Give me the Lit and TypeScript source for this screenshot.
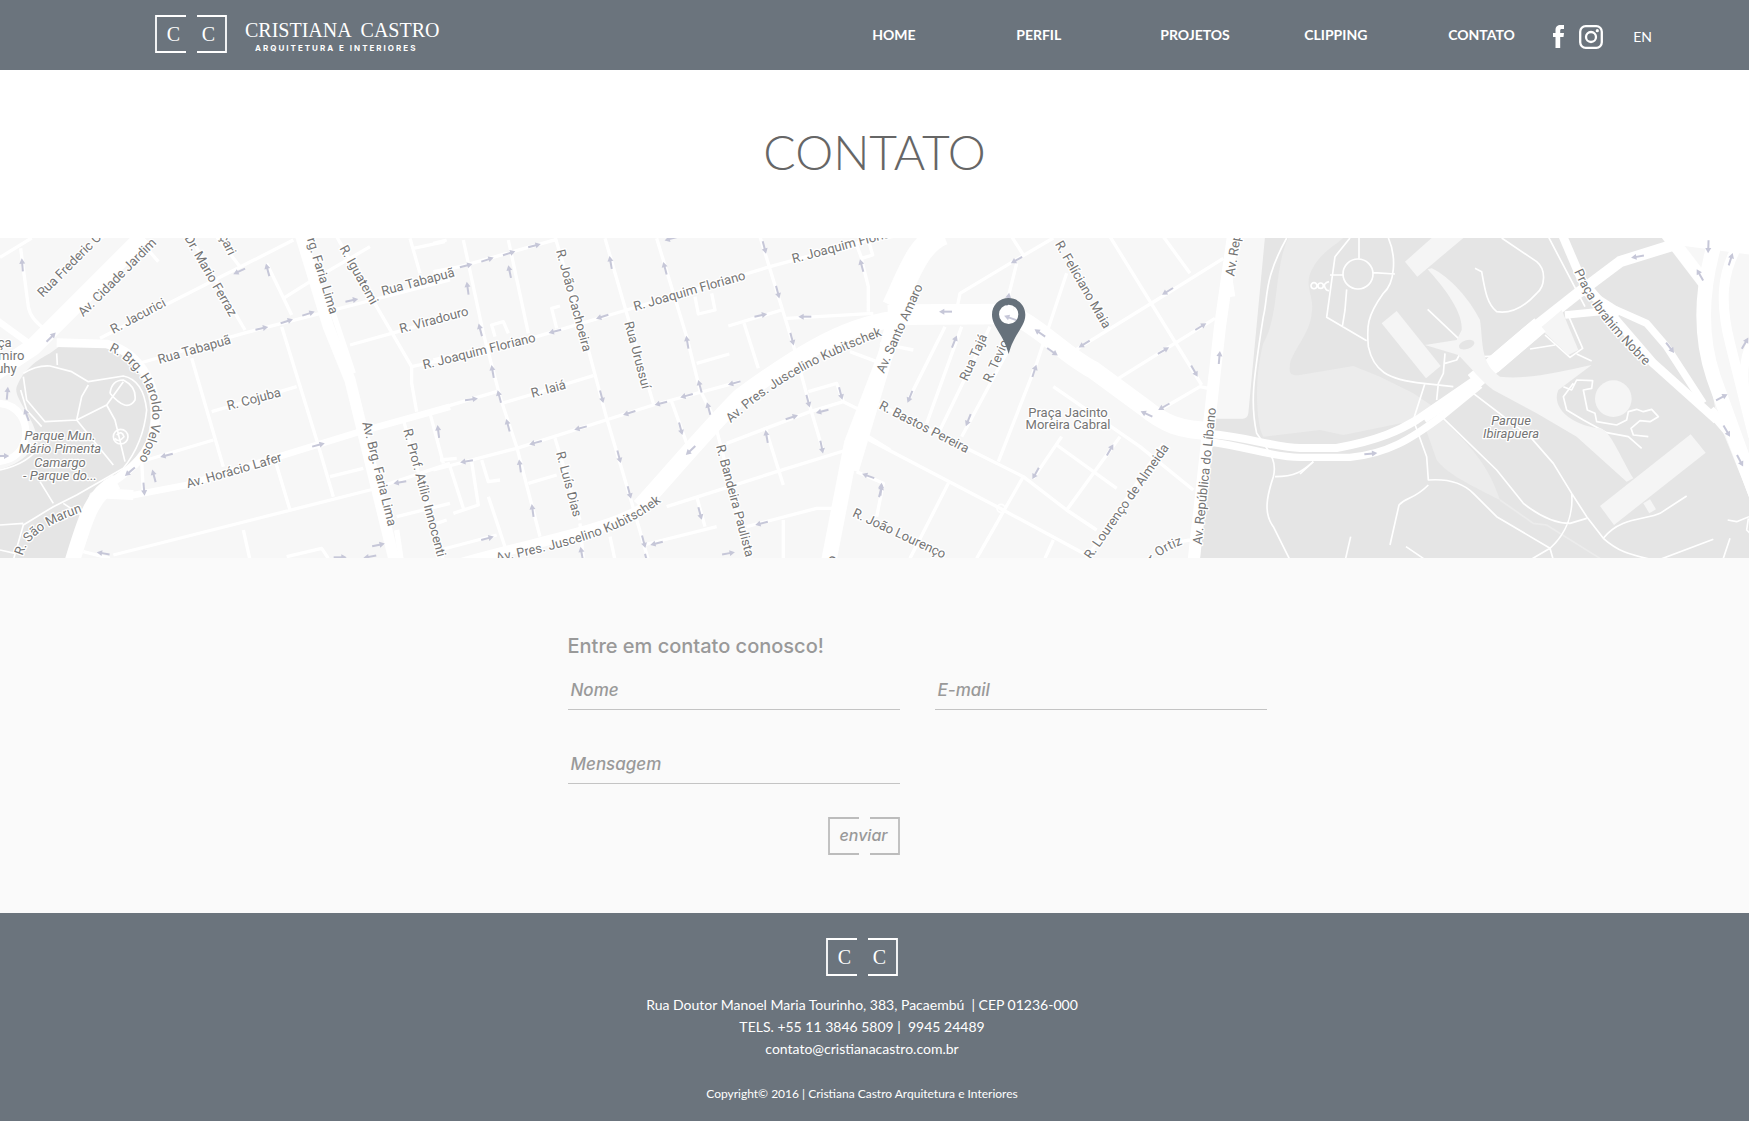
import { LitElement, html, svg, css } from "lit";
import { customElement } from "lit/decorators.js";

type Arrow = [x: number, y: number, angle: number];
type Label = [x: number, y: number, angle: number, text: string, anchor?: string, style?: string];
interface Curve { id: string; d: string; text: string; anchor?: string }
interface Sheet {
  x: number;
  minor: string;
  major: [width: number, d: string][];
  paths: string;
  arrows: Arrow[];
  labels: Label[];
  curves: Curve[];
}

/* The map is drawn three units to the pixel, as four sheets laid side by side. */
const sheets: Sheet[] = [
  {
    x: 0,
    minor: `M0 82L95 24M62 55L85 230Q92 270 140 300M300 325L880 30M570 20L735 300M650 20L720 110
      M400 405L730 310L1350 150M800 100L875 255M845 290L950 630L1000 800M850 205L930 155L1110 50
      M575 385L670 710M635 545L890 470M440 690L640 630M425 690L430 790M340 975L1110 780L1350 700
      M825 690L870 840M730 900L750 990M990 740L1090 715M1050 345L1175 310L1350 260
      M1010 20L1130 230L1235 410L1235 460L1250 545M1235 410L1350 385M1230 25L1260 130M1240 55L1335 35
      M1210 570L1330 990M1290 550L1330 700M1190 860L1350 820M860 980L965 955L985 985M445 60L475 95M250 965L330 985`,
    major: [
      [52, "M-20 430L100 350L430 20"],
      [20, "M-10 270L100 350"],
      [26, "M170 338L320 342C430 370 480 480 464 590C450 670 400 715 330 760"],
      [46, "M350 755C280 790 260 850 215 1000"],
      [22, "M-10 520C60 520 85 580 75 630C60 680 30 690 -10 695"],
      [30, "M290 790L400 795"],
      [20, "M390 797L560 765L1080 605L1350 530"],
      [34, "M900 10L985 290L1050 450L1185 1000"],
      [16, "M1000 250L1060 430M1190 900L1205 1000"],
    ],
    paths: `M70 430Q110 405 150 408L215 425L265 455L370 438Q430 450 440 540Q430 640 370 715L230 795L160 830L70 885L40 990
      M170 370L172 405M70 440L80 510L135 575L230 570L245 500L265 465M230 570L320 525L370 455M230 570L340 705M320 525L345 570L375 695
      M330 490Q335 450 370 450Q410 470 405 510Q380 550 330 490M120 755L160 820M0 885L70 880M190 820L250 860M0 960L45 970
      M62 480L80 540L125 590M0 720Q90 700 125 640M340 620a22 22 0 1 0 44 0a22 22 0 1 0-44 0M350 615Q365 600 372 620Q355 640 345 625`,
    arrows: [
      [67, 105, -95], [153, 322, -45], [22, 490, -85], [80, 555, -110], [8, 678, 0], [718, 124, 155], [803, 120, -105],
      [785, 295, -12], [860, 274, -18], [925, 251, -18], [1055, 211, -12], [500, 676, 165], [390, 725, 140], [432, 777, 85],
      [462, 738, -105], [955, 645, -15], [1200, 757, 170], [1315, 605, -97], [310, 970, 190], [1135, 945, -12], [1110, 980, 170], [1020, 982, 0],
    ],
    labels: [
      [128, 203, -45, "Rua Frederic Chopin"], [250, 262, -45, "Av. Cidade Jardim"], [690, 262, 60, "Dr. Mario Ferraz", "end"],
      [686, 78, 64, "çari", "end"], [340, 312, -28, "R. Jacurici"], [478, 402, -16, "Rua Tabapuã"], [563, 775, -16, "Av. Horácio Lafer"],
      [685, 541, -15, "R. Cojuba"], [1087, 578, 76, "Av. Brg. Faria Lima"], [990, 254, 73, "Av. Brg. Faria Lima", "end"],
      [1018, 55, 61, "R. Iguatemi"], [1148, 197, -15, "Rua Tabapuã"], [1202, 310, -15, "R. Viradouro"],
      [1272, 418, -14, "R. Joaquim Floriano"], [1210, 600, 75, "R. Prof. Atílio Innocenti"],
      [35, 350, 0, "ça", "end"], [73, 390, 0, "miro", "end"], [50, 428, 0, "uhy", "end"],
      [180, 631, 0, "Parque Mun.", "middle", "italic"], [180, 670, 0, "Mário Pimenta", "middle", "italic"],
      [180, 710, 0, "Camargo", "middle", "italic"], [180, 749, 0, "- Parque do...", "middle", "italic"],
    ],
    curves: [
      { id: "veloso", d: "M326 362C400 395 455 470 457 545C457 600 440 640 418 690", text: "R. Brg. Haroldo Veloso" },
      { id: "marun", d: "M68 978C80 930 120 885 280 835", text: "R. São Marun" },
    ],
  },
  {
    x: 1320,
    minor: `M-20 125L60 110L350 28M70 30L130 310L180 500L230 650L300 920M205 30L265 310M345 20L440 340L500 565L570 800L625 990
      M495 25L560 250L640 520M650 25L740 320L780 480L830 580M830 600L930 990M-20 390L290 320L560 240L990 110L1320 20
      M350 295L335 235L360 228M165 320L155 285L190 275L205 310M185 520L270 495L460 437M0 535L170 485M-20 720L230 655L640 525L900 455
      M345 625L420 870M265 760L350 735M695 515L740 640M770 400L868 372M865 288L1025 240M912 280L955 415
      M960 20L1020 215L1060 345L1110 530L1150 665M1040 265L1300 250M1265 90L1285 170L1285 245M1250 45L1265 85L1298 75L1285 30
      M765 200L775 252L825 240L815 190M860 640L1110 545L1210 515L1260 540M1105 485L1190 460L1210 515M680 830L1010 725L1220 660
      M975 590L1030 765M770 800L795 890M610 945L830 890M920 890L1130 835L1190 835M1030 870L1030 990M0 960L170 915M145 800L195 950
      M30 710L70 835M95 695L115 825L40 850M125 690L145 755L180 750M1270 610L1350 660M1230 365L1310 395M1250 725L1330 760L1310 860
      M510 920L525 990M420 880L430 990M0 690L50 685M-20 40L20 30M-10 880L20 870`,
    major: [
      [50, "M1360 268C1200 290 1050 390 900 500C800 600 700 720 600 830"],
      [30, "M640 815C520 900 300 930 60 1000"],
      [46, "M1350 340L1235 640L1165 1000"],
    ],
    paths: "",
    arrows: [
      [78, 107, -15], [142, 89, -18], [207, 70, -18], [283, 47, -15], [83, 175, -98], [209, 125, -102], [121, 300, -105], [487, 260, 162],
      [345, 304, 165], [512, 98, -100], [675, 115, -105], [973, 52, 75], [1013, 186, 75], [1265, 107, -105], [962, 256, -12], [1095, 260, 180],
      [1056, 327, 75], [158, 425, -100], [94, 508, -8], [178, 500, -105], [485, 500, 75], [204, 586, -105], [422, 594, 165], [568, 549, 162],
      [663, 520, 165], [740, 497, 165], [883, 459, 165], [780, 469, -105], [742, 337, -100], [806, 536, -105], [287, 638, 165], [80, 694, 170],
      [722, 596, 75], [752, 661, 137], [240, 708, -98], [537, 680, 75], [568, 787, 75], [278, 842, -98], [1202, 490, 75], [1104, 513, 75],
      [1147, 544, 165], [1055, 562, -18], [980, 620, -100], [1145, 651, 78], [1285, 738, 200], [1322, 783, -75], [780, 850, 75],
      [965, 880, 165], [650, 940, 165], [865, 970, -10], [425, 970, -100], [611, 935, 75], [142, 925, -15], [620, 990, 75], [693, 26, 165],
    ],
    labels: [
      [348, 62, 75, "R. João Cachoeira"], [585, 243, -16, "R. Joaquim Floriano"], [1060, 100, -15, "R. Joaquim Floriano"],
      [553, 278, 75, "Rua Urussuí"], [277, 503, -15, "R. Iaiá"], [348, 668, 75, "R. Luís Dias"], [828, 648, 75, "R. Bandeira Paulista"],
      [1184, 1002, -75, "o"],
    ],
    curves: [
      { id: "kubitschek-east", d: "M872 580C980 480 1100 400 1360 304", text: "Av. Pres. Juscelino Kubitschek" },
      { id: "kubitschek-west", d: "M40 1040L190 992C420 944 560 900 664 815", text: "Av. Pres. Juscelino Kubitschek", anchor: "end" },
    ],
  },
  {
    x: 2640,
    minor: `M395 20L430 75M520 24L390 100L240 190L230 240M410 100L385 200M560 130L470 400L355 695M195 290L85 510M245 290L140 580
      M330 290L180 600M385 360L245 620M-30 510L270 660L430 740L560 840L650 900M-50 620L360 835L610 970M205 760L90 985M430 740L290 985
      M520 930L495 985M570 370L830 210L1030 85M690 20L965 465M850 20L930 130M700 455L1005 265M840 540L960 470L985 475
      M520 470L780 650L940 780M530 645L710 775M545 620L460 745M720 620L560 840M850 640L620 985M0 340L100 360M900 935L930 930`,
    major: [
      [70, "M190 10C110 40 80 150 40 230"],
      [44, "M60 190L10 400L-85 720"],
      [62, "M24 256L60 254L400 252"],
      [54, "M395 255C480 290 560 380 640 420L790 530C850 580 900 602 1000 602"],
      [36, "M1060 10L1020 290L985 600L940 1000"],
      [16, "M1050 150L1058 200"],
    ],
    paths: `M1220 24C1150 150 1165 200 1150 260C1120 450 1110 520 1130 610C1180 680 1190 700 1180 740C1160 800 1150 850 1180 890L1230 990
      M1185 740C1250 740 1270 720 1300 695M351 835a12 12 0 1 0 24 0a12 12 0 1 0-24 0`,
    arrows: [
      [410, 90, 150], [863, 184, 148], [613, 342, 148], [962, 290, -32], [850, 362, -30], [943, 423, 60], [852, 530, 150], [800, 552, 205],
      [197, 245, 180], [391, 264, 200], [480, 309, 215], [517, 365, 35], [1018, 383, -85], [223, 335, -68], [90, 500, 112], [265, 570, 112],
      [463, 423, -72], [690, 660, -60], [467, 730, 120], [3, 778, -85], [384, 208, -80],
    ],
    labels: [
      [524, 42, 60, "R. Felíciano Maia"], [12, 432, -66, "Av. Santo Amaro"], [262, 455, -66, "Rua Tajá"], [332, 460, -66, "R. Tevio"],
      [-5, 535, 27, "R. Bastos Pereira"], [-85, 858, 25, "R. João Lourenço"], [564, 560, 0, "Praça Jacinto", "middle"],
      [564, 598, 0, "Moreira Cabral", "middle"], [632, 990, -55, "R. Lourenço de Almeida"], [965, 945, -84, "Av. República do Líbano"],
      [1063, 140, -81, "Av. República"],
    ],
    curves: [{ id: "ortiz", d: "M820 998Q850 960 930 936", text: "r Ortiz" }],
  },
  {
    x: 3900,
    minor: "",
    major: [
      [24, "M-270 612C-160 620 -80 652 0 654L110 654C240 630 300 600 350 570L540 440"],
      [22, "M-270 636C-160 650 -80 682 0 682L150 682C260 672 330 630 430 555L540 465"],
      [32, "M370 565L540 450"],
      [52, "M520 455L720 285"],
      [34, "M700 295L840 185L960 95L1130 42"],
      [26, "M785 10L845 150L1060 400L1250 570"],
      [22, "M795 255L950 240L1040 280L1100 350L1210 520"],
      [26, "M850 180L960 250"],
      [40, "M1100 10L1215 160"],
      [90, "M1130 0L1360 30"],
      [44, "M1250 20C1200 180 1200 320 1240 440L1370 800"],
      [30, "M1330 20C1260 120 1260 220 1290 340L1360 620"],
      [26, "M1360 330Q1310 400 1350 560"],
      [30, "M1230 540L1290 610L1370 820"],
    ],
    paths: `M150 24L105 80L80 262L200 332M129 132a45 45 0 1 0 90 0a45 45 0 1 0-90 0M177 24V85M90 135H130M220 128L285 132M140 178L135 240L127 290
      M265 24C290 80 285 160 250 190C200 260 200 290 205 350C220 420 260 450 370 460L460 470
      M605 24L710 95C740 120 735 170 710 190C660 245 620 250 590 245C560 220 555 180 545 125L525 115
      M33 167a9 9 0 1 0 18 0a9 9 0 1 0-18 0M54 167a8 8 0 1 0 16 0a8 8 0 1 0-16 0M87 155Q70 160 74 170Q78 182 87 182
      M383 238L475 325M435 370L430 430L415 460L410 510M435 400L470 390L478 375
      M375 460L340 570L380 680L385 750C450 745 490 760 520 790L590 860L750 955L690 990M385 765C340 810 320 800 297 825L270 945
      M430 565L590 720L670 820C720 860 770 880 810 880L860 865M520 490L690 620L760 700L815 790L860 860L910 925C960 970 1000 975 1060 990
      M815 790C820 850 800 910 750 955L760 990M910 925C960 860 1040 870 1080 850L1160 798M1075 990L1240 928M1290 925L1270 985
      M152 920L137 985M318 950L370 985M690 357L765 345M735 315L810 382L848 355L800 245M830 372L875 393M550 380L590 378M745 20L855 230
      M820 460L790 500L800 540L850 570L920 608L985 620L1025 655M790 470L815 480L830 450L878 452L875 475L850 480L862 540L885 550L890 575
      L950 585L980 570L985 545L1010 538L1030 545L1055 538L1075 560L1050 575L1020 572L993 595L1000 615L1045 620M1283 870L1310 875L1347 860
      M0 732L40 695M1345 865L1340 900L1360 920`,
    arrows: [
      [1013, 80, 170], [1225, 50, 92], [1292, 88, -72], [1200, 135, 240], [1110, 353, 52], [1265, 502, -28], [1280, 603, 60],
      [1320, 692, 62], [212, 671, -5], [1335, 340, -60],
    ],
    labels: [
      [633, 584, 0, "Parque", "middle", "italic"], [633, 623, 0, "Ibirapuera", "middle", "italic"],
    ],
    curves: [{ id: "nobre", d: "M822 125C860 210 920 300 1070 440", text: "Praça Ibrahim Nobre" }],
  },
];

const at = (s: Sheet) => `translate(${s.x} 0)`;

@customElement("bracket-frame")
export class BracketFrame extends LitElement {
  static styles = css`
    :host { display: block; width: 72px; height: 38px; }
    .frame { display: block; width: 100%; height: 100%; fill: none; stroke: currentColor; stroke-width: 1.8; }
  `;
  render() {
    return html`<svg class="frame" viewBox="0 0 72 38" aria-hidden="true">
      <path d="M31 1H1V37H31M42 1H71V37H42" />
    </svg>`;
  }
}

@customElement("brand-mark")
export class BrandMark extends LitElement {
  static styles = css`
    :host { display: block; }
    .mark { display: grid; width: 72px; height: 38px; color: #fff; }
    .mark > * { grid-area: 1 / 1; }
    .initials {
      display: flex; justify-content: space-around; align-items: center; padding: 0 1px;
      font: 20px/38px "Liberation Serif", serif;
    }
  `;
  render() {
    return html`<div class="mark">
      <bracket-frame></bracket-frame>
      <div class="initials"><span>C</span><span>C</span></div>
    </div>`;
  }
}

@customElement("street-map")
export class StreetMap extends LitElement {
  static styles = css`
    :host { display: block; height: 320px; }
    .map { display: block; width: 100%; height: 100%; background: #f7f7f7; }
    .park { fill: #e5e5e5; }
    .water { fill: #ececec; }
    .building { fill: #f5f5f5; }
    .road, .path { fill: none; stroke: #fff; stroke-linejoin: round; }
    .minor { stroke-width: 10; }
    .path { stroke-width: 5; }
    .stream { fill: none; stroke: #ececec; stroke-width: 5; }
    .arrow { fill: none; stroke: #c6c7d8; stroke-width: 6; }
    .head { fill: #c6c7d8; stroke: none; }
    .label {
      font-family: Roboto, "Liberation Sans", sans-serif; font-size: 39px; fill: #757575;
      stroke: #fff; stroke-width: 8; stroke-linejoin: round; paint-order: stroke;
    }
    .italic { font-style: italic; }
    .guide { fill: none; }
    .pin { fill: #66717b; fill-rule: evenodd; }
  `;

  private renderArrow([x, y, a]: Arrow) {
    return svg`<g transform="translate(${x} ${y}) rotate(${a})">
      <path class="arrow" d="M-19 0H8" /><path class="head" d="M4-9L20 0L4 9Z" />
    </g>`;
  }

  private renderLabel([x, y, a, text, anchor = "start", style = "upright"]: Label) {
    return svg`<text class="label ${style}" text-anchor=${anchor} transform="translate(${x} ${y}) rotate(${a})">${text}</text>`;
  }

  private renderCurve(c: Curve) {
    const end = c.anchor === "end";
    return svg`<path class="guide" id=${c.id} d=${c.d} /><text class="label" text-anchor=${end ? "end" : "start"}><textPath
      href="#${c.id}" startOffset=${end ? "100%" : "0%"}>${c.text}</textPath></text>`;
  }

  render() {
    return html`<svg class="map" viewBox="0 24 5247 960" preserveAspectRatio="xMidYMid slice" role="img" aria-label="Mapa">
      <path class="park" d="M180 348L320 350C400 380 460 470 450 580C440 660 400 710 340 750L270 790L205 990H0V718C70 700 120 650 105 600C90 550 40 500 50 470C70 420 110 390 150 370Z" />
      <g transform="translate(3900 0)">
        <path class="park" d="M-105 20L-155 550Q-158 568 -175 566H-260L-300 990H1360V830L1250 560L1200 280L1210 150L1085 20Z" />
        <path class="water" d="M-35 24C-80 120-60 250-110 340C-140 450-130 590-110 620L60 600L130 615L350 570L400 530L340 490L240 440L160 408L0 435C-40 440-30 415-30 400C-20 360 30 310 35 250C45 200 10 170 35 120C60 70 100 50 130 24Z" />
        <path class="water" d="M375 590L430 570C500 640 560 690 600 810C500 760 440 730 410 690Z" />
        <path class="stream" d="M600 810L700 880L740 885L900 985" />
      </g>
      ${sheets.map((s) => svg`<g transform=${at(s)}><path class="path" d=${s.paths} /><path class="road minor" d=${s.minor} /></g>`)}
      ${sheets.map((s) => svg`<g transform=${at(s)}>${s.major.map(([w, d]) => svg`<path class="road" stroke-width=${w} d=${d} />`)}</g>`)}
      <g transform="translate(3900 0)">
        <path class="building" d="M315 95L395 24H490L352 140ZM245 280L290 243L422 408L378 445ZM900 828L1172 613L1217 668L942 885ZM1030 820L1050 808L1068 838L1048 850ZM720 295L785 240L835 360L805 375Z" />
        <path class="building" d="M383 118C420 160 490 240 485 300L470 330L375 345L475 375C520 420 540 450 580 480L710 550L830 620L980 755L1000 745C960 680 930 600 900 595C830 590 750 540 775 480L875 405C780 425 680 450 600 440C540 400 550 340 540 270C510 210 450 140 395 115Z" />
        <path class="road" stroke-width="52" d="M578 406L720 285" />
        <circle class="building" cx="940" cy="506" r="55" />
        <ellipse class="park" cx="500" cy="344" rx="24" ry="13" transform="rotate(-18 500 344)" />
      </g>
      ${sheets.map((s) => svg`<g transform=${at(s)}>${s.arrows.map((a) => this.renderArrow(a))}</g>`)}
      ${sheets.map((s) => svg`<g transform=${at(s)}>${s.labels.map((l) => this.renderLabel(l))}${s.curves.map((c) => this.renderCurve(c))}</g>`)}
      <path class="pin" d="M3026 204C2998 204 2976 226 2976 254C2976 290 3010 310 3026 372C3042 310 3076 290 3076 254C3076 226 3054 204 3026 204ZM3026 224a29 29 0 1 1 0 58a29 29 0 1 1 0-58Z" />
    </svg>`;
  }
}

@customElement("app-root")
export class AppRoot extends LitElement {
  static styles = css`
    :host { display: block; min-height: 100vh; background: #fff; font-family: Lato, "Liberation Sans", sans-serif; }
    * { box-sizing: border-box; }
    a { color: inherit; text-decoration: none; }

    .top { display: flex; align-items: center; height: 70px; padding: 0 97px 0 155px; background: #6b747d; color: #fff; }
    .brand { display: flex; align-items: center; gap: 18px; padding-bottom: 2px; }
    .name { font: 20px/24px "Liberation Serif", serif; white-space: pre; }
    .tagline { padding-left: 10px; font: bold 8px/12px Inter, sans-serif; letter-spacing: 2px; }
    .wordmark { display: flex; flex-direction: column; padding-top: 3px; }
    .nav { display: flex; margin-left: auto; font-weight: 700; font-size: 14px; line-height: 20px; }
    .nav a { width: 144px; }
    .nav a:last-child { width: 105px; }
    .social { display: flex; align-items: center; gap: 15px; padding-top: 3px; }
    .icon { display: block; fill: #fff; }
    .lang { margin-left: 30px; padding-top: 3px; font-size: 14px; line-height: 20px; }

    .heading { display: flex; align-items: center; justify-content: center; height: 168px; padding-bottom: 4px; }
    .title { margin: 0; font-weight: 300; font-size: 48px; line-height: 56px; color: #666; }

    .contact { height: 355px; padding-top: 73px; background: #fafafa; }
    .form {
      display: grid; grid-template-columns: 332px 332px; column-gap: 35px; row-gap: 33px; width: 699px;
      margin-left: calc(50% - 307px); color: #999; font-family: Inter, "Liberation Sans", sans-serif;
    }
    .lead { grid-column: 1 / -1; margin: 0 0 -25px; font-weight: 500; font-size: 20px; line-height: 30px; }
    .field { display: grid; }
    .field > * { grid-area: 1 / 1; }
    .message { grid-column: 1; }
    .label { padding: 10px 3px 8px; font: italic 500 17px/22px Inter, "Liberation Sans", sans-serif; pointer-events: none; }
    .input {
      display: block; width: 100%; height: 41px; margin: 0; padding: 10px 3px 8px; border: 0; border-bottom: 1px solid #c4c4c4;
      border-radius: 0; background: none; color: #777; font: italic 500 17px/22px Inter, "Liberation Sans", sans-serif;
      outline: none; resize: none; overflow: hidden;
    }
    .input:not(:placeholder-shown) + .label { opacity: 0; }
    .send {
      display: grid; grid-column: 1; justify-self: end; width: 72px; height: 38px; padding: 0; border: 0; background: none;
      color: #bcbcbc; cursor: pointer;
    }
    .send > * { grid-area: 1 / 1; }
    .caption { color: #999; font: italic 500 16px/36px Inter, "Liberation Sans", sans-serif; }

    .bottom {
      display: flex; flex-direction: column; align-items: center; min-height: 208px; padding: 25px 25px 0 0;
      background: #6b747d; color: #fff;
    }
    .address { margin-top: 18px; font-style: normal; font-size: 14px; line-height: 22px; text-align: center; white-space: pre; }
    .line { display: block; }
    .copyright { margin: 24px 0 0; font-size: 12px; line-height: 20px; }
  `;

  private links = ["HOME", "PERFIL", "PROJETOS", "CLIPPING", "CONTATO"];

  render() {
    return html`
      <header class="top">
        <a class="brand" href="#home">
          <brand-mark></brand-mark>
          <span class="wordmark">
            <span class="name">CRISTIANA  CASTRO</span>
            <span class="tagline">ARQUITETURA E INTERIORES</span>
          </span>
        </a>
        <nav class="nav">${this.links.map((l) => html`<a href="#${l.toLowerCase()}">${l}</a>`)}</nav>
        <div class="social">
          <a href="#facebook" aria-label="Facebook">
            <svg class="icon" width="11" height="23" viewBox="0 0 11 23">
              <path d="M2.5 23V12H0V8H2.500V5.200C2.500 1.500 4.500 0 7.500 0H11V4H8.800C7.500 4 7.200 4.600 7.200 5.600V8H11L10.500 12H7.200V23Z" />
            </svg>
          </a>
          <a href="#instagram" aria-label="Instagram">
            <svg class="icon" width="24" height="24" viewBox="0 0 24 24">
              <rect x="1.200" y="1.200" width="21.600" height="21.600" rx="5.500" fill="none" stroke="#fff" stroke-width="2.300" />
              <circle cx="12" cy="12" r="5" fill="none" stroke="#fff" stroke-width="2.300" />
              <circle cx="18.300" cy="5.700" r="1.600" />
            </svg>
          </a>
        </div>
        <a class="lang" href="#en">EN</a>
      </header>
      <main>
        <div class="heading"><h1 class="title">CONTATO</h1></div>
        <street-map></street-map>
        <section class="contact">
          <form class="form">
            <h2 class="lead">Entre em contato conosco!</h2>
            <div class="field">
              <input class="input" id="nome" type="text" placeholder=" " />
              <label class="label" for="nome">Nome</label>
            </div>
            <div class="field">
              <input class="input" id="email" type="email" placeholder=" " />
              <label class="label" for="email">E-mail</label>
            </div>
            <div class="field message">
              <textarea class="input" id="mensagem" rows="1" placeholder=" "></textarea>
              <label class="label" for="mensagem">Mensagem</label>
            </div>
            <button class="send" type="button">
              <bracket-frame></bracket-frame>
              <span class="caption">enviar</span>
            </button>
          </form>
        </section>
      </main>
      <footer class="bottom">
        <brand-mark></brand-mark>
        <address class="address"><span class="line">Rua Doutor Manoel Maria Tourinho, 383, Pacaembú  | CEP 01236-000</span><span class="line">TELS. +55 11 3846 5809 |  9945 24489</span><a class="line" href="mailto:contato@cristianacastro.com.br">contato@cristianacastro.com.br</a></address>
        <p class="copyright">Copyright© 2016 | Cristiana Castro Arquitetura e Interiores</p>
      </footer>
    `;
  }
}
